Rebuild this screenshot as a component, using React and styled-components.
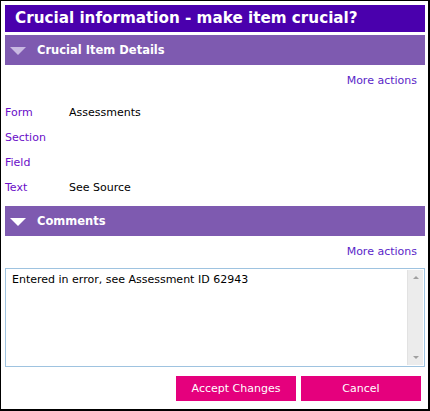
import React from 'react';
import styled, { createGlobalStyle } from 'styled-components';

const Global = createGlobalStyle`
  html, body {
    margin: 0;
    padding: 0;
    background: #ffffff;
  }
  body {
    font-family: 'DejaVu Sans', Verdana, sans-serif;
  }
`

const Dialog = styled.div`
  box-sizing: border-box;
  width: 430px;
  height: 411px;
  border-left: 1px solid #000;
  border-top: 1px solid #000;
  border-right: 2px solid #000;
  border-bottom: 2px solid #000;
  padding: 4px 3px 0 4px;
  display: flex;
  flex-direction: column;
  background: #fff;
`
const Title = styled.div`
  height: 27px;
  background: #4a00ad;
  color: #fff;
  font-weight: bold;
  font-size: 15.2px;
  line-height: 27px;
  padding-left: 10px;
  white-space: nowrap;
`
const SectionBar = styled.div`
  margin-top: 3px;
  height: 30px;
  background: #7e5ab0;
  display: flex;
  align-items: center;
  color: #fff;
  font-weight: bold;
  font-size: 11.5px;
`
const Arrow = styled.span`
  width: 0;
  height: 0;
  margin: 1px 11px 0 5px;
  border-left: 8px solid transparent;
  border-right: 8px solid transparent;
  border-top: 8px solid ${p => p.$color};
`
const ActionRow = styled.div`
  display: flex;
  justify-content: flex-end;
  padding: 9px 8px 0 0;
  height: 20px;
`
const MoreLink = styled.a`
  color: #5b1fc8;
  font-size: 11px;
  text-decoration: none;
  cursor: pointer;
`
const Fields = styled.div`
  display: grid;
  grid-template-columns: 64px 1fr;
  grid-auto-rows: 25px;
  align-items: center;
  font-size: 11px;
  margin-top: 6px;
  margin-bottom: 3px;
`
const Label = styled.span`
  color: #6a0dc8;
`
const Value = styled.span`
  color: #000;
`
const CommentBox = styled.div`
  margin-top: 3px;
  height: 99px;
  border: 1px solid #9ec3e0;
  box-sizing: border-box;
  display: flex;
`
const CommentText = styled.div`
  flex: 1;
  padding: 4px 6px;
  font-size: 11px;
  color: #000;
`
const Scroll = styled.div`
  width: 15px;
  margin: 1px 1px 1px 0;
  background: #ececec;
  border-left: 1px solid #e2e2e2;
  display: flex;
  flex-direction: column;
  justify-content: space-between;
  align-items: center;
  padding: 6px 0;
`
const Tri = styled.span`
  width: 0;
  height: 0;
  border-left: 3px solid transparent;
  border-right: 3px solid transparent;
  ${p => p.$up ? 'border-bottom: 3px solid #a0a0a0;' : 'border-top: 3px solid #a0a0a0;'}
`
const Buttons = styled.div`
  display: flex;
  justify-content: flex-end;
  gap: 5px;
  padding: 9px 4px 0 0;
`
const Button = styled.button`
  width: 120px;
  height: 25px;
  border: none;
  background: #e5007d;
  color: #fff;
  font-family: 'DejaVu Sans', Verdana, sans-serif;
  font-size: 11px;
  padding: 0;
  cursor: pointer;
`

export default function App() {
  return (
    <>
      <Global />
      <Dialog>
        <Title>Crucial information - make item crucial?</Title>
        <SectionBar><Arrow $color="#c9b9e2" />Crucial Item Details</SectionBar>
        <ActionRow><MoreLink>More actions</MoreLink></ActionRow>
        <Fields>
          <Label>Form</Label><Value>Assessments</Value>
          <Label>Section</Label><Value></Value>
          <Label>Field</Label><Value></Value>
          <Label>Text</Label><Value>See Source</Value>
        </Fields>
        <SectionBar><Arrow $color="#ffffff" />Comments</SectionBar>
        <ActionRow><MoreLink>More actions</MoreLink></ActionRow>
        <CommentBox>
          <CommentText>Entered in error, see Assessment ID 62943</CommentText>
          <Scroll><Tri $up /><Tri /></Scroll>
        </CommentBox>
        <Buttons>
          <Button>Accept Changes</Button>
          <Button>Cancel</Button>
        </Buttons>
      </Dialog>
    </>
  )
}
